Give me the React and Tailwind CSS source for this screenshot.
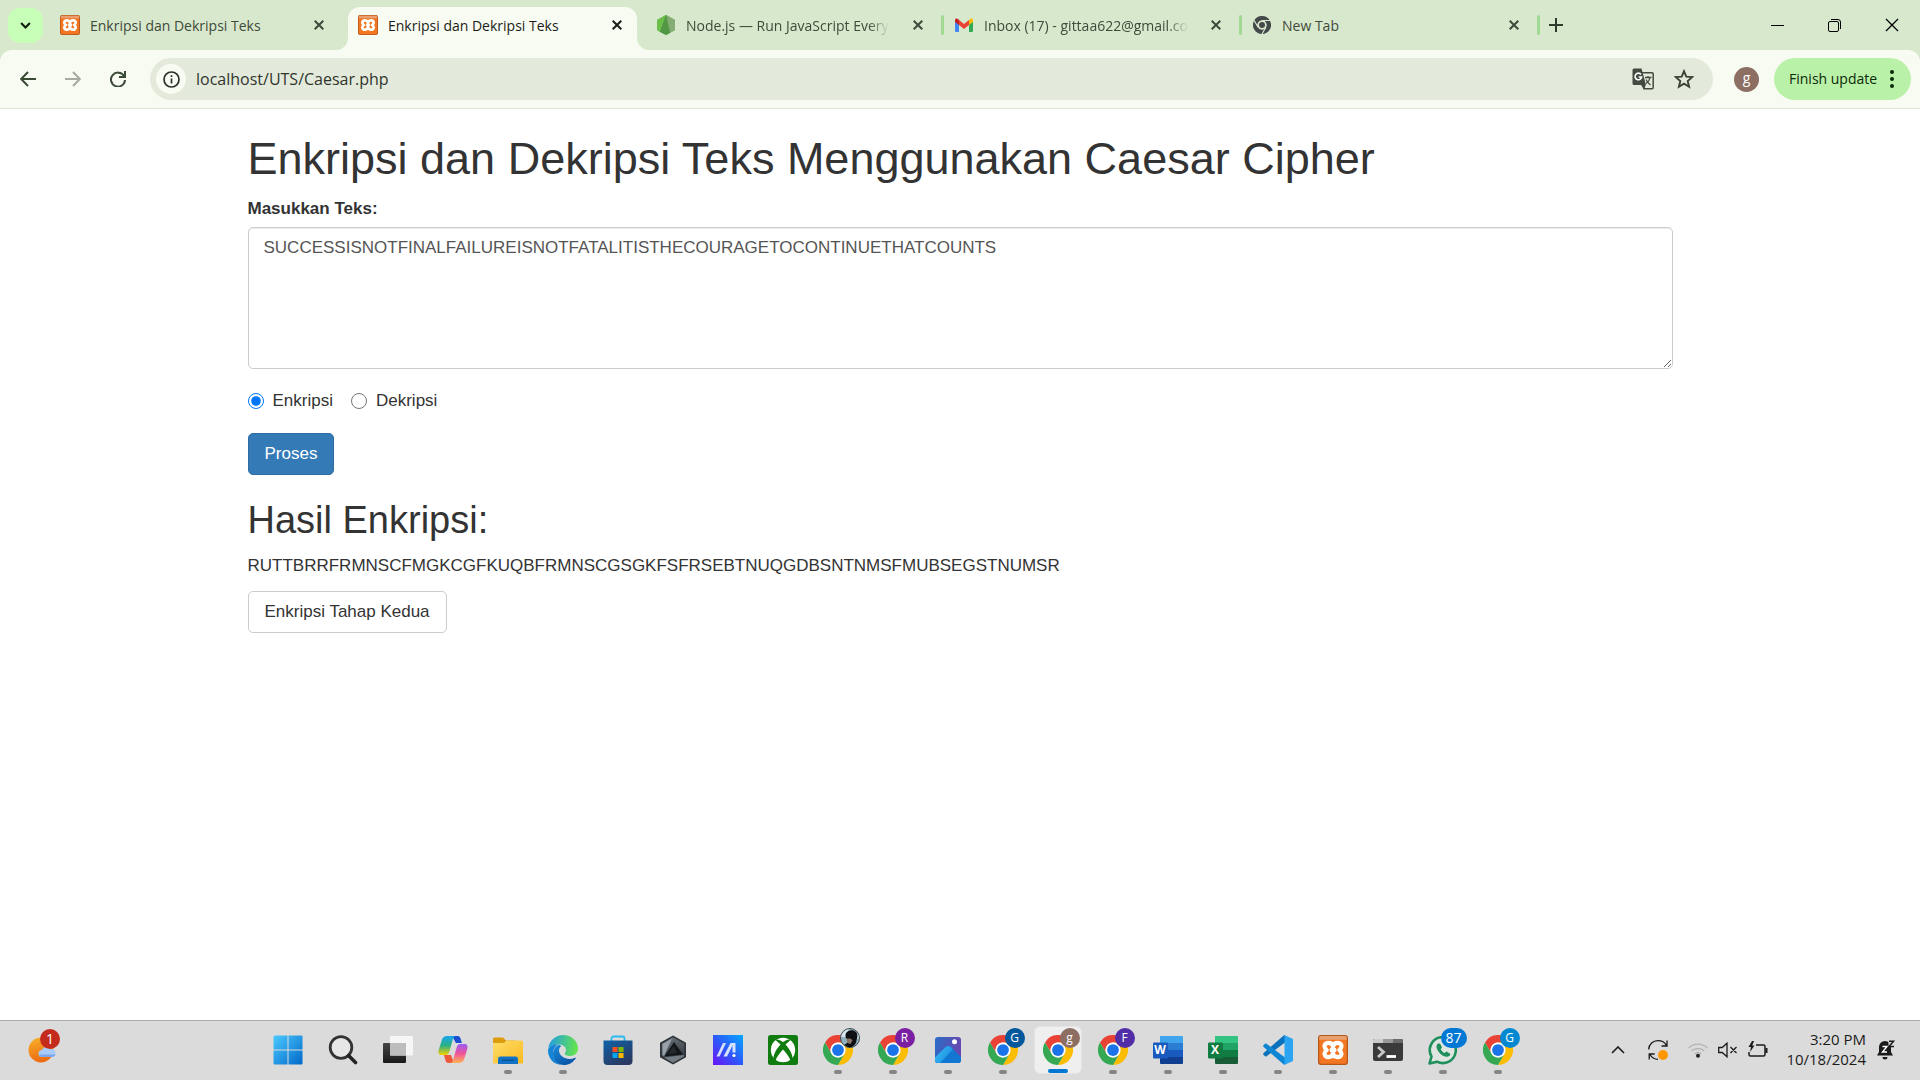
import React, { useState } from "react";

const UI = "font-['Open_Sans',sans-serif]";

function Chrome({ className = "size-[30px]", mono = false }) {
  const c = mono ? ["#44494a", "#44494a", "#44494a", "#44494a"] : ["#ea4335", "#fbbc04", "#34a853", "#1a73e8"];
  return (
    <svg viewBox="0 0 48 48" className={className} aria-hidden="true">
      <path d="M24 12H44.8A24 24 0 0 0 3.2 12L13.6 30A12 12 0 0 1 24 12Z" fill={c[0]} />
      <path d="M44.8 12A24 24 0 0 1 24 48L34.4 30A12 12 0 0 0 24 12Z" fill={c[1]} />
      <path d="M3.2 12A24 24 0 0 0 24 48L34.4 30A12 12 0 0 1 13.6 30Z" fill={c[2]} />
      {mono && <path d="M24 12H45M34.4 30L24 48M13.6 30L3.2 12" stroke="#d8e8cd" strokeWidth="3" />}
      <circle cx="24" cy="24" r="12" fill={mono ? "#d8e8cd" : "#fff"} />
      <circle cx="24" cy="24" r={mono ? 8 : 9.4} fill={c[3]} />
    </svg>
  );
}

function Xampp({ className }) {
  return (
    <svg viewBox="0 0 30 30" className={className} aria-hidden="true">
      <rect width="30" height="30" rx="3" fill="#b5561a" />
      <rect x="1.200" y="1" width="27.600" height="27.800" rx="2" fill="#f37623" />
      <path d="M1.200 3a2 2 0 0 1 2-2h23.600a2 2 0 0 1 2 2v1.800H1.200z" fill="#e9a070" />
      <path
        d="M15 11.500C14 6.800 6.500 6.800 6.500 11.300c0 1.700 1 2.700 2.200 3.700c-1.200 1-2.200 2-2.200 3.700c0 4.500 7.500 4.500 8.500-.2c1 4.700 8.500 4.700 8.500.2c0-1.700-1-2.700-2.200-3.700c1.200-1 2.200-2 2.200-3.700C23.500 6.800 16 6.800 15 11.500Z"
        fill="none"
        stroke="#fff"
        strokeWidth="4.200"
        strokeLinejoin="round"
      />
      <path d="M14 15h2" stroke="#fff" strokeWidth="5" strokeLinecap="round" />
    </svg>
  );
}

function NodeIcon() {
  return (
    <svg viewBox="0 0 20 20" className="size-5" aria-hidden="true">
      <path d="M10 0l9 5v10l-9 5l-9-5V5z" fill="#5b9f4c" />
      <path d="M10 0L1 5v10l3 2z" fill="#6cc04a" />
      <path d="M10 0l9 5v10l-5 3z" fill="#83ad73" />
      <path d="M4 17l6-17l4 18l-4 2z" fill="#529744" />
    </svg>
  );
}

function Gmail() {
  return (
    <svg viewBox="0 0 20 20" className="size-5" aria-hidden="true">
      <path d="M1 6v10a1 1 0 0 0 1 1h3V8z" fill="#4285f4" />
      <path d="M15 8v9h3a1 1 0 0 0 1-1V6z" fill="#34a853" />
      <path d="M5 5v5l5 4l5-4V5l-5 4z" fill="#ea4335" />
      <path d="M1 5v2l4 3V5L4 4C2.500 2.800 1 3.500 1 5z" fill="#c5221f" />
      <path d="M19 5v2l-4 3V5l1-1c1.500-1.200 3-.5 3 1z" fill="#fbbc04" />
    </svg>
  );
}

function Cross({ className = "size-[10px]", w = 2 }) {
  return (
    <svg viewBox="0 0 10 10" className={className} fill="none" stroke="currentColor" strokeWidth={w} aria-hidden="true">
      <path d="M.7.7l8.600 8.600M9.300.7L.7 9.300" />
    </svg>
  );
}

const tabs = [
  { title: "Enkripsi dan Dekripsi Teks", icon: <Xampp className="size-5" /> },
  { title: "Enkripsi dan Dekripsi Teks", icon: <Xampp className="size-5" />, active: true },
  { title: "Node.js — Run JavaScript Every", icon: <NodeIcon />, sep: true, fade: true },
  { title: "Inbox (17) - gittaa622@gmail.co", icon: <Gmail />, sep: true, fade: true },
  { title: "New Tab", icon: <Chrome mono className="size-[18px]" />, sep: true },
];

function Flare({ side }) {
  return (
    <svg
      viewBox="0 0 12 12"
      className={side === "left" ? "absolute bottom-0 -left-3 size-3" : "absolute -right-3 bottom-0 size-3 -scale-x-100"}
      aria-hidden="true"
    >
      <path d="M12 0v12H0A12 12 0 0 0 12 0z" fill="#f8fbf2" />
    </svg>
  );
}

function Tab({ title, icon, active, sep, fade }) {
  return (
    <div className="flex w-[298px] min-w-0 shrink items-end self-stretch">
      <div
        className={
          active
            ? "relative mr-[9px] flex h-[43px] min-w-0 flex-1 items-center rounded-t-xl bg-[#f8fbf2] pb-[7px] pl-[10px] text-[#1a1c18]"
            : "mr-[9px] flex h-[43px] min-w-0 flex-1 items-center pb-[7px] pl-[10px] text-[#3f4a3a]"
        }
      >
        {active && <Flare side="left" />}
        {active && <Flare side="right" />}
        <button className="flex min-w-0 flex-1 items-center gap-[10px] text-left">
          <span className="flex w-5 shrink-0 justify-center">{icon}</span>
          <span
            className={
              fade
                ? "pt-px text-sm leading-5 whitespace-nowrap [mask-image:linear-gradient(to_right,#000_90%,transparent)]"
                : "pt-px text-sm leading-5 whitespace-nowrap"
            }
          >
            {title}
          </span>
        </button>
        <button aria-label={"Close " + title} className="flex size-10 shrink-0 items-center justify-center">
          <Cross />
        </button>
      </div>
      {sep && <span className="mb-[15px] -ml-[6px] h-5 w-[3px] shrink-0 rounded-full bg-[#a1d992]" />}
    </div>
  );
}

function TabStrip() {
  return (
    <div className="flex h-[50px] bg-[#d8e8cd]">
      <button aria-label="Search tabs" className="mt-2 mr-[7px] ml-2 flex size-[35px] shrink-0 items-center justify-center rounded-xl bg-[#c8ffb8]">
        <svg viewBox="0 0 12 8" className="h-[7px] w-[11px]" fill="none" stroke="#10200c" strokeWidth="2.400" aria-hidden="true">
          <path d="M1 1.200l5 5l5-5" />
        </svg>
      </button>
      {tabs.map((t, i) => (
        <Tab key={i} {...t} />
      ))}
      <button aria-label="New tab" className="flex w-8 shrink-0 items-center justify-center text-[#2f3b2b]">
        <svg viewBox="0 0 14 14" className="size-[14px]" stroke="currentColor" strokeWidth="2" aria-hidden="true">
          <path d="M7 0v14M0 7h14" />
        </svg>
      </button>
      <div className="ml-auto flex shrink-0 text-black">
        <button aria-label="Minimize" className="flex w-[57px] items-center justify-center">
          <span className="h-px w-[13px] bg-black" />
        </button>
        <button aria-label="Restore" className="flex w-[57px] items-center justify-center">
          <svg viewBox="0 0 13 13" className="size-[13px]" fill="none" stroke="currentColor" aria-hidden="true">
            <rect x=".5" y="2.500" width="10" height="10" rx="1.500" />
            <path d="M3 .5h7a2.500 2.500 0 0 1 2.500 2.500v7" />
          </svg>
        </button>
        <button aria-label="Close window" className="flex w-[57px] items-center justify-center">
          <Cross className="size-[14px]" w={0.9} />
        </button>
      </div>
    </div>
  );
}

function Toolbar() {
  return (
    <div className="bg-[#d8e8cd]">
      <div className="flex h-[59px] items-center rounded-t-xl border-b border-[#dde4d8] bg-[#f8fbf2] pr-[9px]">
        <div className="flex w-[150px] shrink-0 pl-[5px] text-[#3a4a35]">
          <button aria-label="Back" className="flex h-[42px] w-[45px] items-center justify-center">
            <svg viewBox="0 0 16 16" className="size-4" fill="none" stroke="currentColor" strokeWidth="2" aria-hidden="true">
              <path d="M16 8H1.500M8 1L1.200 8L8 15" />
            </svg>
          </button>
          <button aria-label="Forward" className="flex h-[42px] w-[45px] items-center justify-center text-[#a6aba2]">
            <svg viewBox="0 0 16 16" className="size-4" fill="none" stroke="currentColor" strokeWidth="2" aria-hidden="true">
              <path d="M0 8h14.500M8 1l6.800 7L8 15" />
            </svg>
          </button>
          <button aria-label="Reload" className="flex h-[42px] w-[45px] items-center justify-center">
            <svg viewBox="0 0 16 16" className="size-4" fill="none" stroke="currentColor" strokeWidth="2" aria-hidden="true">
              <path d="M14 5A7 7 0 1 0 15 9M15 0v6H9" />
            </svg>
          </button>
        </div>
        <div className="flex h-[42px] flex-1 items-center rounded-full bg-[#e3eadb] pr-[19px] pl-[6px]">
          <button aria-label="Site information" className="mr-[10px] flex size-[30px] items-center justify-center rounded-full bg-[#f8fbf2]">
            <svg viewBox="0 0 17 17" className="size-[17px]" fill="none" stroke="#2b3029" strokeWidth="1.700" aria-hidden="true">
              <circle cx="8.500" cy="8.500" r="7.500" />
              <path d="M8.500 7.500v5M8.500 4.300v1.800" />
            </svg>
          </button>
          <input
            aria-label="Address"
            defaultValue="localhost/UTS/Caesar.php"
            className="min-w-0 flex-1 bg-transparent text-base text-[#30352d] outline-none"
          />
          <div className="flex items-center gap-5">
            <button aria-label="Translate this page">
              <svg viewBox="0 0 22 22" className="size-[22px]" aria-hidden="true">
                <path d="M9 4.800h11a1.200 1.200 0 0 1 1.200 1.200v13.500a1.200 1.200 0 0 1-1.200 1.200h-8z" fill="#e3eadb" stroke="#434b40" strokeWidth="1.500" />
                <path d="M2 .5h7.500l4.500 16.500H2A1.500 1.500 0 0 1 .5 15.500V2A1.500 1.500 0 0 1 2 .5z" fill="#434b40" />
                <path d="M9 17l3 4.500l1.800-4.500z" fill="#434b40" />
                <path d="M9 6.500A3.300 3.300 0 1 0 9.600 9H6.600" fill="none" stroke="#fff" strokeWidth="1.600" />
                <path d="M13 9.500h6.500M16 8v1.500M18 9.500c-.5 3-2.500 5-4 6M14 11.500c1 2 3 4.500 4.500 5.500" fill="none" stroke="#434b40" strokeWidth="1.300" />
              </svg>
            </button>
            <button aria-label="Bookmark this tab">
              <svg viewBox="0 0 20 20" className="size-5" fill="none" stroke="#3a4237" strokeWidth="1.900" aria-hidden="true">
                <path d="M10 2.200l2.300 5.400l5.900.5l-4.500 3.900l1.400 5.700L10 14.700l-5.100 3l1.400-5.700L1.800 8.100l5.900-.5z" />
              </svg>
            </button>
          </div>
        </div>
        <button aria-label="Profile" className="mr-[15px] ml-[21px] flex size-[25px] items-center justify-center rounded-full bg-[#8d6e63] pb-[2px] text-sm leading-5 text-white">
          g
        </button>
        <button className="flex h-[42px] w-[137px] shrink-0 items-center justify-between rounded-full bg-[#baf1a9] pr-[17px] pl-[15px] text-[#0b2a08]">
          <span className="text-sm">Finish update</span>
          <svg viewBox="0 0 4 18" className="h-[18px] w-1" fill="#0b2a08" aria-hidden="true">
            <circle cx="2" cy="2" r="2" />
            <circle cx="2" cy="9" r="2" />
            <circle cx="2" cy="16" r="2" />
          </svg>
        </button>
      </div>
    </div>
  );
}

function Page() {
  const [mode, setMode] = useState("enkripsi");
  return (
    <main className="flex-1 bg-white font-['Liberation_Sans',Arial,sans-serif] text-[17px] leading-[25px] text-[#333]">
      <div className="mx-auto w-full max-w-[1463px] px-[19px] pt-[25px]">
        <h1 className="mb-3 text-[45px] leading-[50px]">Enkripsi dan Dekripsi Teks Menggunakan Caesar Cipher</h1>
        <form onSubmit={(e) => e.preventDefault()}>
          <label htmlFor="teks" className="mb-[6px] block font-bold">
            Masukkan Teks:
          </label>
          <textarea
            id="teks"
            rows={5}
            defaultValue="SUCCESSISNOTFINALFAILUREISNOTFATALITISTHECOURAGETOCONTINUETHATCOUNTS"
            className="mb-[19px] block w-full rounded-[5px] border border-[#ccc] px-[15px] pt-[7px] pb-2 text-[#555] shadow-[inset_0_1px_1px_rgba(0,0,0,0.075)] outline-none"
          />
          <div className="mb-5 flex gap-[18px]">
            <label className="flex items-center gap-[9px]">
              <input type="radio" name="mode" checked={mode === "enkripsi"} onChange={() => setMode("enkripsi")} className="size-4 accent-[#0075ff]" />
              Enkripsi
            </label>
            <label className="flex items-center gap-[9px]">
              <input type="radio" name="mode" checked={mode === "dekripsi"} onChange={() => setMode("dekripsi")} className="size-4 accent-[#0075ff]" />
              Dekripsi
            </label>
          </div>
          <button type="submit" className="block h-[42px] rounded-[5px] border border-[#2e6da4] bg-[#337ab7] px-4 pb-[2px] text-white">
            Proses
          </button>
        </form>
        <h2 className="mt-[25px] mb-3 text-[38px] leading-[41px]">Hasil Enkripsi:</h2>
        <p className="mb-[13px]">RUTTBRRFRMNSCFMGKCGFKUQBFRMNSCGSGKFSFRSEBTNUQGDBSNTNMSFMUBSEGSTNUMSR</p>
        <button className="h-[42px] rounded-[5px] border border-[#ccc] bg-white px-4 pb-[2px]">Enkripsi Tahap Kedua</button>
      </div>
    </main>
  );
}

function Svg({ box = "0 0 30 30", children }) {
  return (
    <svg viewBox={box} className="size-[30px]" aria-hidden="true">
      {children}
    </svg>
  );
}

function Grad({ id, a, b, x2 = 1, y2 = 1 }) {
  return (
    <linearGradient id={id} x1="0" y1="0" x2={x2} y2={y2}>
      <stop stopColor={a} />
      <stop offset="1" stopColor={b} />
    </linearGradient>
  );
}

const Windows = (
  <Svg>
    <defs>
      <linearGradient id="win" gradientUnits="userSpaceOnUse" x1="0" y1="0" x2="30" y2="30">
        <stop stopColor="#4ccbff" />
        <stop offset="1" stopColor="#0067c8" />
      </linearGradient>
    </defs>
    <path d="M1.500.5h13v14H.5v-13zM15.500.5h13a1 1 0 0 1 1 1v13h-14zM.5 15.500h14v14h-13a1 1 0 0 1-1-1zM15.500 15.500h14v13a1 1 0 0 1-1 1h-13z" fill="url(#win)" />
  </Svg>
);

const Search = (
  <Svg>
    <circle cx="13" cy="12.500" r="10.800" fill="#e6e6e6" stroke="#333" strokeWidth="2.800" />
    <path d="M20.500 20.500l7 7" stroke="#222" strokeWidth="3.600" strokeLinecap="round" />
  </Svg>
);

const TaskView = (
  <Svg>
    <defs>
      <Grad id="tv" a="#444" b="#1a1a1a" x2={0} />
    </defs>
    <rect x="0" y="8" width="23" height="20" rx="1" fill="url(#tv)" />
    <rect x="7" y="1" width="23" height="19.500" rx="1" fill="#f6f6f6" />
    <rect x="7" y="8" width="16" height="12.500" fill="#bdbdbd" />
  </Svg>
);

const Copilot = (
  <Svg>
    <defs>
      <linearGradient id="cpa" x1="0" y1="0" x2="0" y2="1">
        <stop stopColor="#17a6f0" />
        <stop offset=".5" stopColor="#2bb184" />
        <stop offset="1" stopColor="#f5d000" />
      </linearGradient>
      <linearGradient id="cpb" x1="0" y1="0" x2="0" y2="1">
        <stop stopColor="#9b5cf5" />
        <stop offset=".5" stopColor="#f0529a" />
        <stop offset="1" stopColor="#ffb457" />
      </linearGradient>
    </defs>
    <path d="M14 1h5.500c2 0 2.700 1.200 3.200 3l1.200 4h-6z" fill="#1b4fd0" />
    <path d="M16 28h-5.500c-2 0-2.700-1.200-3.200-3L6 20h7z" fill="#ec5a3b" />
    <path d="M9 1h9c-2 0-2.700 1.500-3.200 3.500L11.500 16c-.7 2.500-1.500 4-4 4H3.500C.8 20 0 18 .7 15L4 4.500C4.800 2.200 6.500 1 9 1z" fill="url(#cpa)" />
    <path d="M21 28h-9c2 0 2.700-1.500 3.200-3.500L18.500 13c.7-2.500 1.500-4 4-4h4c2.700 0 3.500 2 2.800 5L26 24.500c-.8 2.300-2.500 3.500-5 3.500z" fill="url(#cpb)" />
  </Svg>
);

const Explorer = (
  <Svg>
    <defs>
      <Grad id="fx" a="#ffde6a" b="#f9b91f" />
    </defs>
    <path d="M0 4a1.500 1.500 0 0 1 1.500-1.500h8.500l3 3H22V12H0z" fill="#dc9c0c" />
    <path d="M0 8h11l2.500-2.500h15A1.500 1.500 0 0 1 30 7v21.500H0z" fill="url(#fx)" />
    <path d="M5 29v-5a2.500 2.500 0 0 1 2.500-2.500h15A2.500 2.500 0 0 1 25 24v5z" fill="#1273c4" />
    <path d="M9 25.300h12.500" stroke="#0a4f92" strokeWidth="1.200" />
  </Svg>
);

const Edge = (
  <Svg>
    <defs>
      <Grad id="eg1" a="#1f9be8" b="#63e34f" x2={1} y2={0.1} />
      <Grad id="eg2" a="#1b8fdd" b="#0a56a8" x2={0.6} />
    </defs>
    <path d="M.3 13C1.500 5.500 7.700 0 15 0c8.500 0 15 6 15 13.500c0 5-4 7.500-8 7.500c-3.500 0-5.300-1.200-5.300-2.300c0-.8 1.300-1.500 1.300-3.700c0-3-3-5.500-7-5.500C6 9.500 2 11.500.3 13z" fill="url(#eg1)" />
    <path d="M.2 14C2 10.500 6.500 9 10.500 9.500c-3 1-5.500 4.500-5.500 9c0 5 4 10 9 11.400C6 30 0 23.500 0 15.500z" fill="#1484d6" />
    <path d="M11.500 9.700C7.500 11 5 14.500 5 19c0 5.500 4.500 11 11 11c5 0 9.300-2.700 11.700-6.500c.4-.7-.2-1-.8-.7c-1.500.8-3.200 1.200-5 1.200C16 24 11 20 11 15.500c0-1.800.8-3.300 2.300-4.300z" fill="url(#eg2)" />
  </Svg>
);

const Store = (
  <Svg>
    <defs>
      <Grad id="st" a="#0e62a8" b="#2a3a62" x2={0.6} />
    </defs>
    <path d="M8.500 7V3.500a2 2 0 0 1 2-2h9a2 2 0 0 1 2 2V7" fill="none" stroke="#27b9f0" strokeWidth="1.800" />
    <path d="M.5 5.500h29V26a4 4 0 0 1-4 4h-21a4 4 0 0 1-4-4z" fill="url(#st)" />
    <path d="M9.500 12h5v5h-5z" fill="#f25022" />
    <path d="M15.500 12h5v5h-5z" fill="#7fba00" />
    <path d="M9.500 18h5v5h-5z" fill="#00a4ef" />
    <path d="M15.500 18h5v5h-5z" fill="#ffb900" />
  </Svg>
);

const Armoury = (
  <Svg>
    <defs>
      <Grad id="ar" a="#6d767e" b="#33383e" x2={0.3} />
    </defs>
    <path d="M15 .5l13 7.300v14.400L15 29.500L2 22.200V7.800z" fill="#2e3338" />
    <path d="M15 2.300l11.300 6.400v12.600L15 27.700L3.700 21.300V8.700z" fill="url(#ar)" />
    <path d="M14 3.500L4.500 9v11l1.500 1z" fill="#9aa2a9" />
    <path d="M16 7l9 12.500L6.500 21.500z" fill="#14171a" />
    <path d="M15.500 11l3.500 7l-9 1z" fill="#24292e" />
    <path d="M6 22.500l20-2.500v1.500L15 27.700z" fill="#747c83" />
  </Svg>
);

const MyAsus = (
  <Svg>
    <defs>
      <linearGradient id="ma" x1="0" y1="1" x2="1" y2="0">
        <stop stopColor="#6a12f5" />
        <stop offset=".5" stopColor="#2c5bfb" />
        <stop offset="1" stopColor="#05a8ff" />
      </linearGradient>
    </defs>
    <path d="M0 0h30v30H0z" fill="url(#ma)" />
    <path d="M3.500 21.500L10 8h3L6.500 21.500zM10.500 21.500L17.500 8H22.500v9.500H19.500v-7l-5.500 11z" fill="#d5e0ff" />
    <circle cx="21" cy="20.500" r="1.600" fill="#fff" />
  </Svg>
);

const Xbox = (
  <Svg>
    <rect width="30" height="30" rx="2.500" fill="#107c10" />
    <circle cx="15" cy="15" r="12.200" fill="#fff" />
    <path d="M7.500 4.500C10 4 13 5.500 15 7c2-1.500 5-3 7.500-2.500c-.5 1.500-3.500 3.500-5 5c3.500 3.500 7.500 10.500 7 14.500l-2 1.500C21 21.500 18 17.500 15 14.500C12 17.500 9 21.500 7.500 25.500l-2-1.500c-.5-4 3.500-11 7-14.500c-1.500-1.500-4.500-3.500-5-5z" fill="#107c10" />
  </Svg>
);

const Photos = (
  <Svg>
    <defs>
      <Grad id="ph" a="#2470c8" b="#6a45b0" x2={1} y2={0.3} />
      <Grad id="ph2" a="#3cc4f5" b="#1a8be0" x2={1} y2={0.6} />
      <clipPath id="phc">
        <rect x="2" y="2" width="26" height="26" rx="3" />
      </clipPath>
    </defs>
    <g clipPath="url(#phc)">
      <path d="M0 0h30v30H0z" fill="url(#ph)" />
      <path d="M0 24.500L12.500 12.200a4 4 0 0 1 5.500 0L30 24v8H0z" fill="#1277d3" />
      <path d="M0 24.500L12.500 12.200a4 4 0 0 1 5.500 0L20 14.500L7 28l-4 3z" fill="url(#ph2)" />
    </g>
    <circle cx="21.500" cy="6.800" r="2.500" fill="#fff" />
  </Svg>
);

function Office({ letter, shades, tile }) {
  return (
    <span className="relative flex size-[30px] items-center">
      <Svg>
        <path d="M7 1h22a1 1 0 0 1 1 1v6H7z" fill={shades[0]} />
        <path d="M7 8h23v7H7z" fill={shades[1]} />
        <path d="M7 15h23v7H7z" fill={shades[2]} />
        <path d="M7 22h23v6a1 1 0 0 1-1 1H8a1 1 0 0 1-1-1z" fill={shades[3]} />
        <rect x="0" y="7.500" width="15" height="16" rx="1.200" fill={tile} />
      </Svg>
      <span className="absolute left-0 w-[15px] text-center text-xs font-bold text-white">{letter}</span>
    </span>
  );
}

const VsCode = (
  <Svg>
    <path d="M22 7.500L2.800 21.800L.3 19.800v-1.600L21 .3l3 1z" fill="#0a72bd" />
    <path d="M22 22.500L2.800 8.200L.3 10.200v1.600L21 29.700l3-1z" fill="#0f86d3" />
    <path d="M21.500.2L29 3.600a1.600 1.600 0 0 1 1 1.500v19.800a1.600 1.600 0 0 1-1 1.500l-7.500 3.400z" fill="#2ba4f2" />
  </Svg>
);

const Terminal = (
  <Svg>
    <path d="M0 5.500A1.500 1.500 0 0 1 1.500 4h27A1.500 1.500 0 0 1 30 5.500V24a2 2 0 0 1-2 2H2a2 2 0 0 1-2-2z" fill="#3a3a3a" />
    <path d="M0 8V5.500A1.500 1.500 0 0 1 1.500 4H10v4z" fill="#ccc" />
    <path d="M10 4h10v4H10z" fill="#999" />
    <path d="M20 4h8.500A1.500 1.500 0 0 1 30 5.500V8H20z" fill="#6b6b6b" />
    <path d="M5 12l5.500 5L5 22" fill="none" stroke="#c9c9c9" strokeWidth="2.800" />
    <path d="M13.500 21.500H23" stroke="#fff" strokeWidth="2.800" />
  </Svg>
);

const WhatsApp = (
  <Svg>
    <path d="M1.500 28.500l2-7A13 13 0 1 1 9 26.700z" fill="#dfe6e1" stroke="#1f8f5b" strokeWidth="2.600" strokeLinejoin="round" />
    <path d="M10 8.500c-1.500 1-2 3-1 5.500c1.500 3.500 4.500 6.500 8 7.500c2.500.6 5 0 5.500-2.500l-4-2.500l-2 1.500c-1.500-.7-3-2.200-3.700-3.800l1.200-2L12 8.500z" fill="#1f8f5b" />
  </Svg>
);

function Badge({ text, className }) {
  return (
    <span className={"absolute -top-[7px] flex h-5 items-center justify-center rounded-full leading-4 text-white " + className}>{text}</span>
  );
}

function Photo() {
  return (
    <svg viewBox="0 0 20 20" className="absolute -top-[7px] -right-[7px] size-5" aria-hidden="true">
      <circle cx="10" cy="10" r="9.500" fill="#8fb0bd" stroke="#3c4a52" />
      <path d="M2.500 5.500C4 3 6.500 1.500 9 1.200L5.500 9L1 9z" fill="#d8e8ee" />
      <path d="M15 3.500c2.500 1.500 4 4 4 7l-3 1z" fill="#c8d4da" />
      <path d="M6 5c2-3 7-4 10-1c2 2 1.500 6 .5 8c0 3-2 6-5 7c-3 .5-6-.5-7-2.500c2-1 4.500-2 3.500-5c-2.500-1-3-4-2-6.500z" fill="#0d0f12" />
      <path d="M6.500 11c2-1 5-.5 6 1.500l-2 3.500c-2 0-4-2-4-5z" fill="#8b7468" />
    </svg>
  );
}

const badge = "-right-[7px] w-5 text-xs ";

const apps = [
  { name: "Start", icon: Windows },
  { name: "Search", icon: Search },
  { name: "Task View", icon: TaskView },
  { name: "Copilot", icon: Copilot },
  { name: "File Explorer", icon: Explorer, open: true },
  { name: "Edge", icon: Edge, open: true },
  { name: "Microsoft Store", icon: Store },
  { name: "Armoury Crate", icon: Armoury },
  { name: "MyASUS", icon: MyAsus },
  { name: "Xbox", icon: Xbox },
  { name: "Chrome", icon: <Chrome />, over: <Photo />, open: true },
  { name: "Chrome R", icon: <Chrome />, over: <Badge text="R" className={badge + "bg-[#7b1fa2]"} />, open: true },
  { name: "Photos", icon: Photos, open: true },
  { name: "Chrome G", icon: <Chrome />, over: <Badge text="G" className={badge + "bg-[#01579b]"} />, open: true },
  { name: "Chrome g", icon: <Chrome />, over: <Badge text="g" className={badge + "bg-[#8d6e63]"} />, open: true, active: true },
  { name: "Chrome F", icon: <Chrome />, over: <Badge text="F" className={badge + "bg-[#512da8]"} />, open: true },
  { name: "Word", icon: <Office letter="W" shades={["#41a5ee", "#2b7cd3", "#185abd", "#103f91"]} tile="#185abd" />, open: true },
  { name: "Excel", icon: <Office letter="X" shades={["#33c481", "#21a366", "#107c41", "#185c37"]} tile="#107c41" />, open: true },
  { name: "Visual Studio Code", icon: VsCode, open: true },
  { name: "XAMPP", icon: <Xampp className="size-[30px]" />, open: true },
  { name: "Terminal", icon: Terminal, open: true },
  { name: "WhatsApp", icon: WhatsApp, over: <Badge text="87" className="-right-[9px] w-[26px] bg-[#0078d4] text-sm" />, open: true },
  { name: "Chrome profile", icon: <Chrome />, over: <Badge text="G" className={badge + "bg-[#0288d1]"} />, open: true },
];

function Taskbar() {
  return (
    <footer className="flex h-[60px] items-stretch border-t border-[#acacac] bg-[#dbdbdb] pb-px">
      <div className="flex grow-[232] basis-0 items-center pl-7">
        <button aria-label="Weather" className="relative">
          <svg viewBox="0 0 30 28" className="h-7 w-[30px]" aria-hidden="true">
            <defs>
              <Grad id="sun" a="#f7b32b" b="#ee6c12" x2={0.3} />
            </defs>
            <circle cx="13" cy="14" r="12.500" fill="url(#sun)" />
            <path d="M14 21a3.500 3.500 0 0 1 0-7a5 5 0 0 1 9-1a4 4 0 0 1 1 8z" fill="#a9cbf7" />
            <path d="M11 18.500c1 2.500 2 2.500 3.500 2.500H24c2 0 3-1 3.500-2.500z" fill="#7fa8ec" />
          </svg>
          <Badge text="1" className="-right-[2px] w-5 bg-[#c42b1c] text-sm" />
        </button>
      </div>
      <nav className="flex shrink-0" aria-label="Taskbar">
        {apps.map((a) => (
          <button key={a.name} aria-label={a.name} className="flex w-[55px] items-center justify-center">
            <span
              className={
                a.active
                  ? "relative flex size-12 items-center justify-center rounded-md border border-[#e4e4e4] bg-[#efefef]"
                  : "relative flex size-12 items-center justify-center"
              }
            >
              <span className="relative">
                {a.icon}
                {a.over}
              </span>
              {a.open && (
                <span
                  className={
                    a.active
                      ? "absolute bottom-0 h-1 w-5 rounded-full bg-[#0078d4]"
                      : "absolute bottom-0 h-1 w-2 rounded-full bg-[#858585]"
                  }
                />
              )}
            </span>
          </button>
        ))}
      </nav>
      <div className="flex grow-[370] basis-0 items-center justify-end pr-[25px] text-[#1b1b1b]">
        <button aria-label="Show hidden icons" className="mr-[23px]">
          <svg viewBox="0 0 14 8" className="h-2 w-[14px]" fill="none" stroke="currentColor" strokeWidth="1.600" aria-hidden="true">
            <path d="M1 7l6-6l6 6" />
          </svg>
        </button>
        <button aria-label="Windows Update" className="mr-5">
          <svg viewBox="0 0 20 20" className="size-5" fill="none" stroke="currentColor" strokeWidth="1.300" aria-hidden="true">
            <path d="M.7 9.500C1 4 5 .7 10 .7c4 0 7 2 8.500 4.800M19 .5v5.500h-5.500M10 19.300c-3.500 0-6.500-2-8-4.800M1.200 19.500V14h5.500" />
            <circle cx="15" cy="15" r="5" fill="#ff9800" stroke="none" />
          </svg>
        </button>
        <button aria-label="Network, volume and battery" className="mr-[18px] flex items-center gap-[10px]">
          <svg viewBox="0 0 20 16" className="h-4 w-5" fill="none" stroke="#b4b4b4" strokeWidth="1.400" aria-hidden="true">
            <path d="M.7 6a13 13 0 0 1 18.600 0M3.700 9a9 9 0 0 1 12.600 0M6.700 12a5 5 0 0 1 6.600 0" />
            <circle cx="10" cy="13.800" r="2" fill="#222" stroke="none" />
          </svg>
          <svg viewBox="0 0 20 16" className="h-4 w-5" fill="none" stroke="currentColor" strokeWidth="1.300" aria-hidden="true">
            <path d="M.7 5.500h3.500L9 1.200v13.600l-4.800-4.300H.7zM12.500 5l6 6M18.500 5l-6 6" />
          </svg>
          <svg viewBox="0 0 20 18" className="h-[18px] w-5" fill="none" stroke="currentColor" strokeWidth="1.500" aria-hidden="true">
            <path d="M8 4h7.500A1.500 1.500 0 0 1 17 5.500v8a1.500 1.500 0 0 1-1.500 1.500h-13A1.500 1.500 0 0 1 1 13.500V11" />
            <path d="M4 0L.5 6h2.500l-1 5l4.500-6.500H4.200L6 0zM17.500 7h2v5h-2z" fill="currentColor" stroke="none" />
          </svg>
        </button>
        <button className="pb-[2px] text-right text-[15px] leading-5 whitespace-nowrap">
          <span className="block">3:20 PM</span>
          <span className="block">10/18/2024</span>
        </button>
        <button aria-label="Notifications" className="ml-[11px]">
          <svg viewBox="0 0 18 20" className="h-5 w-[18px]" aria-hidden="true">
            <path d="M8 1a6 6 0 0 1 6 6v5l2 3.500H0L2 12V7a6 6 0 0 1 6-6zM5.500 17h5a2.500 2.500 0 0 1-5 0z" fill="#1b1b1b" />
            <path d="M5.500 6.500h4.500L5.500 12H10" fill="none" stroke="#fff" strokeWidth="1.400" />
            <path d="M11.500 0h6v7h-6z" fill="#dbdbdb" />
            <path d="M12 1.300h4.500L12 6.500h5" fill="none" stroke="#1b1b1b" strokeWidth="1.500" />
          </svg>
        </button>
      </div>
    </footer>
  );
}

export default function App() {
  return (
    <div className={"flex min-h-screen flex-col " + UI}>
      <header>
        <TabStrip />
        <Toolbar />
      </header>
      <Page />
      <Taskbar />
    </div>
  );
}
